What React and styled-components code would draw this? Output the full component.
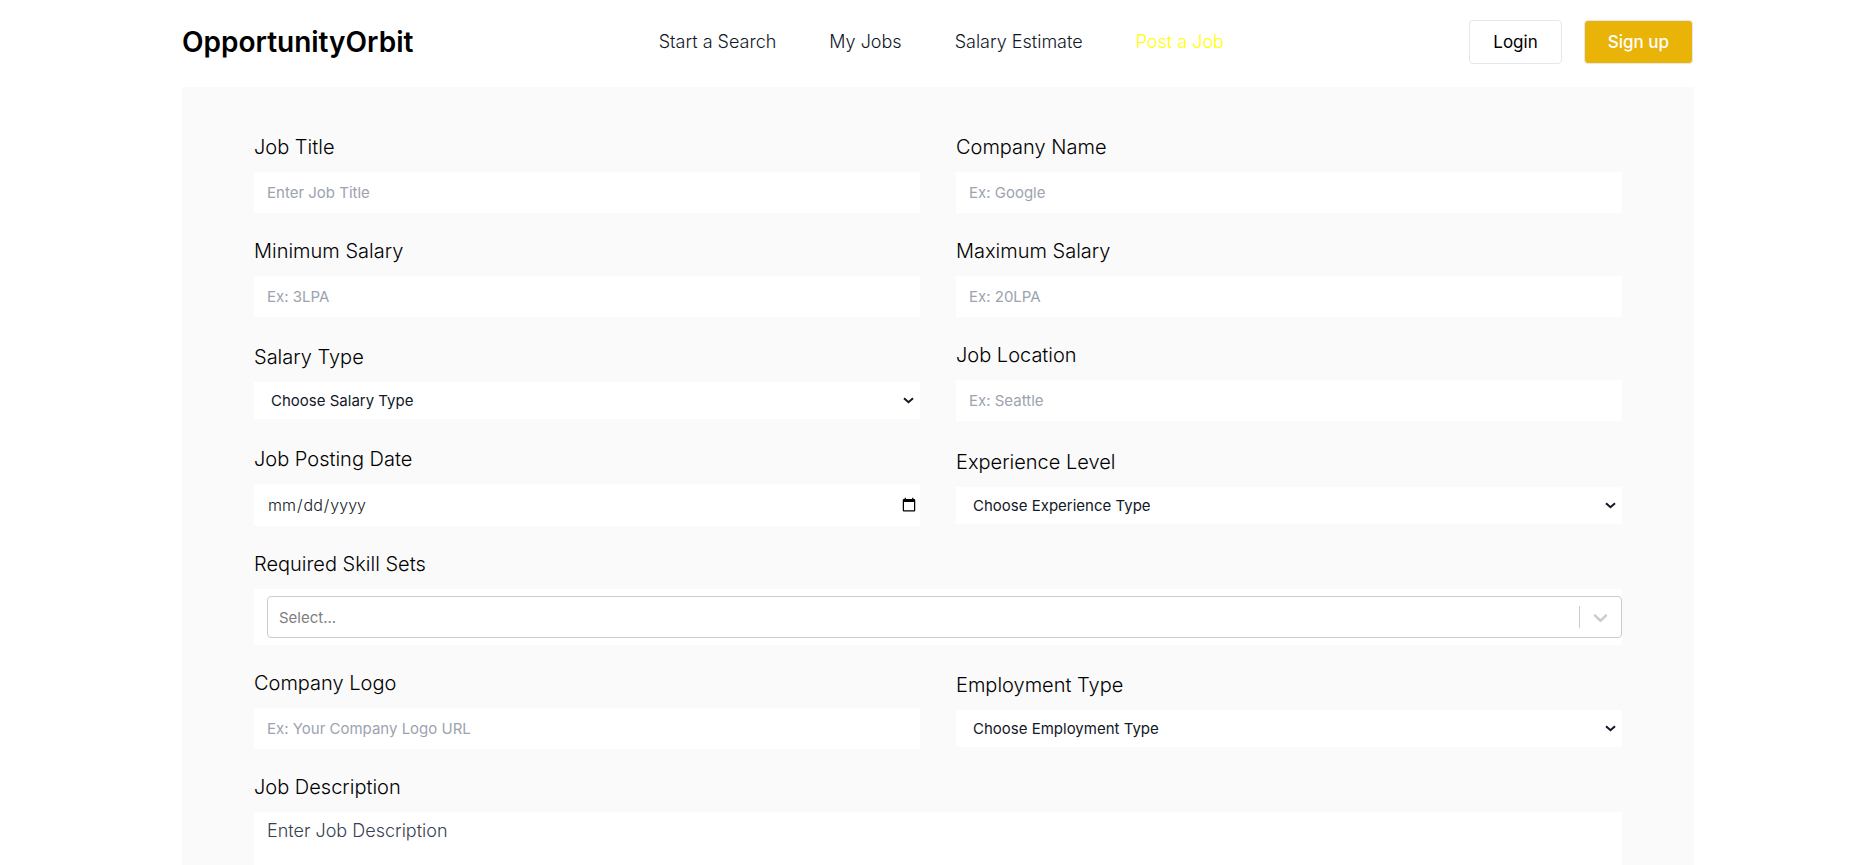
import React from "react";
import styled, { createGlobalStyle, css } from "styled-components";

const GlobalStyle = createGlobalStyle`
  *, *::before, *::after { box-sizing: border-box; }
  body {
    margin: 0;
    background: #fff;
    color: #000;
    font-family: Inter, "Open Sans", sans-serif;
  }
  button, input, select, textarea { font: inherit; color: inherit; }
`;

const Page = styled.div`
  min-height: 100vh;
  display: flex;
  flex-direction: column;
  padding: 0 175px 0 182px;

  @media (max-width: 1500px) {
    padding: 0 24px;
  }
`;

const Header = styled.header`
  display: flex;
  flex-wrap: wrap;
  align-items: center;
  justify-content: space-between;
  gap: 20px;
  padding: 20px 1px 23px 0;
`;

const Logo = styled.a`
  color: #000;
  font-size: 28px;
  font-weight: 600;
  line-height: 36px;
  text-decoration: none;
`;

const Nav = styled.nav`
  display: flex;
  flex-wrap: wrap;
  gap: 16px 53px;
`;

const NavLink = styled.a`
  color: ${({ $active }) => ($active ? "#ffff00" : "#111827")};
  font-size: 18px;
  font-weight: 300;
  line-height: 24px;
  text-decoration: none;
`;

const Actions = styled.div`
  display: flex;
  gap: 22px;
`;

const Button = styled.button`
  height: 44px;
  padding: 0 23px;
  border: 1px solid #e5e7eb;
  border-radius: 4px;
  background: ${({ $primary }) => ($primary ? "#eab308" : "#fff")};
  color: ${({ $primary }) => ($primary ? "#fff" : "#000")};
  font-size: 17px;
  font-weight: ${({ $primary }) => ($primary ? 500 : 400)};
  cursor: pointer;
`;

const Form = styled.form`
  flex: 1;
  display: grid;
  grid-template-columns: repeat(2, minmax(0, 1fr));
  grid-template-rows: repeat(6, auto) 1fr;
  align-items: center;
  gap: 24px 36px;
  padding: 46px 72px 0;
  background: #fafafa;
`;

const Field = styled.div`
  display: flex;
  flex-direction: column;
  gap: 11px;
  ${({ $wide }) => $wide && css`grid-column: 1 / -1;`}
  ${({ $fill }) => $fill && css`align-self: stretch;`}
`;

const Label = styled.label`
  font-size: 20px;
  font-weight: 300;
  line-height: 28px;
`;

const controlBase = css`
  width: 100%;
  border: 0;
  border-radius: 0;
  background: #fff;
  outline-color: #eab308;
`;

const TextInput = styled.input`
  ${controlBase}
  height: 41px;
  padding: 0 13px;
  font-size: 15px;
  &::placeholder { color: #9ca3af; opacity: 1; }
`;

const DateInput = styled.input`
  ${controlBase}
  height: 42px;
  padding: 0 1px 0 13px;
  color: #111827;
  font-size: 16px;
  font-weight: 300;
`;

const SelectBox = styled.div`
  display: grid;
  align-items: center;

  > * { grid-area: 1 / 1; }

  > svg {
    justify-self: end;
    margin-right: 6px;
    color: #111827;
    pointer-events: none;
  }
`;

const Select = styled.select`
  ${controlBase}
  appearance: none;
  height: 37px;
  padding: 0 24px 0 17px;
  color: #111827;
  font-size: 15px;
  font-weight: 400;
`;

const SkillsBox = styled.div`
  padding: 7px 0 7px 13px;
  background: #fff;
`;

const SkillsControl = styled.div`
  display: flex;
  align-items: center;
  height: 42px;
  border: 1px solid #ccc;
  border-radius: 4px;
`;

const SkillsInput = styled.input`
  flex: 1;
  min-width: 0;
  height: 100%;
  padding: 0 11px;
  border: 0;
  background: transparent;
  outline: 0;
  font-size: 15px;
  &::placeholder { color: #808080; opacity: 1; }
`;

const SkillsToggle = styled.button`
  display: flex;
  align-items: center;
  justify-content: center;
  width: 42px;
  height: 22px;
  padding: 0;
  border: 0;
  border-left: 1px solid #ccc;
  background: transparent;
  color: #ccc;
`;

const TextArea = styled.textarea`
  ${controlBase}
  flex: 1;
  min-height: 53px;
  padding: 6px 13px;
  font-size: 18px;
  font-weight: 300;
  line-height: 26px;
  resize: none;
  &::placeholder { color: #374151; opacity: 1; }
`;

const ChevronDown = () => (
  <svg width="23" height="23" viewBox="0 0 20 20" fill="currentColor" aria-hidden="true">
    <path d="M4.516 7.548c0.436-0.446 1.043-0.481 1.576 0l3.908 3.747 3.908-3.747c0.533-0.481 1.141-0.446 1.574 0 0.436 0.445 0.408 1.197 0 1.615-0.406 0.418-4.695 4.502-4.695 4.502-0.217 0.223-0.502 0.335-0.787 0.335s-0.57-0.112-0.789-0.335c0 0-4.287-4.084-4.695-4.502s-0.436-1.17 0-1.615z" />
  </svg>
);

const SelectArrow = () => (
  <svg width="11" height="7" viewBox="0 0 11 7" fill="none" stroke="currentColor" strokeWidth="2" aria-hidden="true">
    <path d="M1 1.2 5.5 5.2 10 1.2" />
  </svg>
);

const TextField = ({ id, label, placeholder }) => (
  <Field>
    <Label htmlFor={id}>{label}</Label>
    <TextInput id={id} name={id} type="text" placeholder={placeholder} />
  </Field>
);

const SelectField = ({ id, label, prompt, options }) => (
  <Field>
    <Label htmlFor={id}>{label}</Label>
    <SelectBox>
      <Select id={id} name={id} defaultValue="">
        <option value="">{prompt}</option>
        {options.map((option) => (
          <option key={option} value={option}>{option}</option>
        ))}
      </Select>
      <SelectArrow />
    </SelectBox>
  </Field>
);

export default function App() {
  return (
    <>
      <GlobalStyle />
      <Page>
        <Header>
          <Logo href="#home">OpportunityOrbit</Logo>
          <Nav>
            <NavLink href="#search">Start a Search</NavLink>
            <NavLink href="#my-jobs">My Jobs</NavLink>
            <NavLink href="#salary">Salary Estimate</NavLink>
            <NavLink href="#post-job" $active>Post a Job</NavLink>
          </Nav>
          <Actions>
            <Button type="button">Login</Button>
            <Button type="button" $primary>Sign up</Button>
          </Actions>
        </Header>
        <Form>
          <TextField id="jobTitle" label="Job Title" placeholder="Enter Job Title" />
          <TextField id="companyName" label="Company Name" placeholder="Ex: Google" />
          <TextField id="minPrice" label="Minimum Salary" placeholder="Ex: 3LPA" />
          <TextField id="maxPrice" label="Maximum Salary" placeholder="Ex: 20LPA" />
          <SelectField
            id="salaryType"
            label="Salary Type"
            prompt="Choose Salary Type"
            options={["Hourly", "Monthly", "Yearly"]}
          />
          <TextField id="jobLocation" label="Job Location" placeholder="Ex: Seattle" />
          <Field>
            <Label htmlFor="postingDate">Job Posting Date</Label>
            <DateInput id="postingDate" name="postingDate" type="date" />
          </Field>
          <SelectField
            id="experienceLevel"
            label="Experience Level"
            prompt="Choose Experience Type"
            options={["Internship", "Fresher", "Experienced"]}
          />
          <Field $wide>
            <Label htmlFor="skills">Required Skill Sets</Label>
            <SkillsBox>
              <SkillsControl>
                <SkillsInput id="skills" name="skills" type="text" placeholder="Select..." />
                <SkillsToggle type="button" aria-label="Show skills">
                  <ChevronDown />
                </SkillsToggle>
              </SkillsControl>
            </SkillsBox>
          </Field>
          <TextField id="companyLogo" label="Company Logo" placeholder="Ex: Your Company Logo URL" />
          <SelectField
            id="employmentType"
            label="Employment Type"
            prompt="Choose Employment Type"
            options={["Full-time", "Part-time", "Temporary"]}
          />
          <Field $wide $fill>
            <Label htmlFor="description">Job Description</Label>
            <TextArea id="description" name="description" placeholder="Enter Job Description" />
          </Field>
        </Form>
      </Page>
    </>
  );
}
